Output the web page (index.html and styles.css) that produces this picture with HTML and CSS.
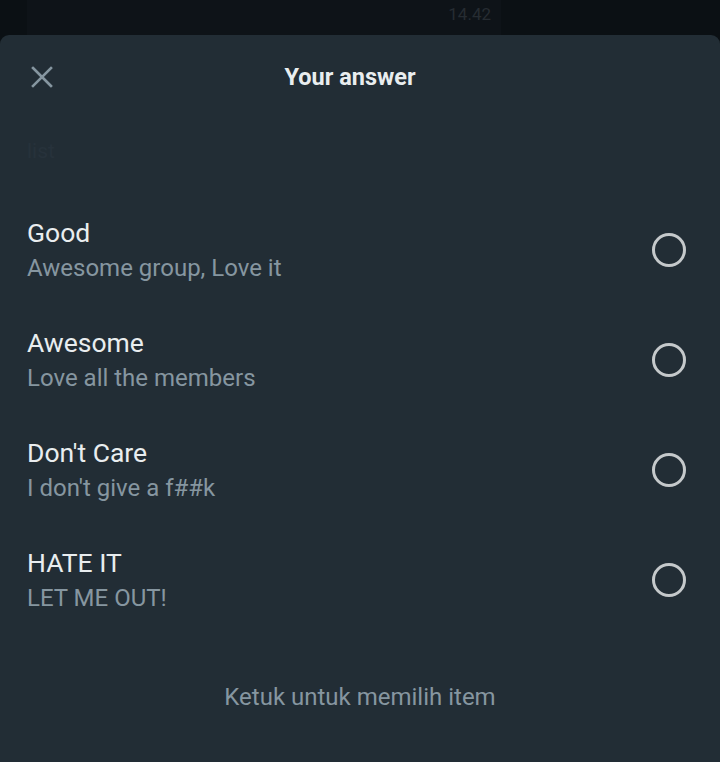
FILE: index.html
```html
<!DOCTYPE html>
<html lang="en">
<head>
	<meta charset="UTF-8">
	<meta name="viewport" content="width=device-width, initial-scale=1.0">
	<title>Your answer</title>
	<link rel="stylesheet" href="styles.css">
</head>
<body>
	<div class="chat">
		<div class="bubble"><span class="time">14.42</span></div>
		<div class="wall"></div>
	</div>

	<div class="sheet">
		<div class="header">
			<svg class="close" width="22" height="22" viewBox="0 0 22 22">
				<path d="M2 2 L20 20 M20 2 L2 20" stroke="#8696a0" stroke-width="2.6" stroke-linecap="square" fill="none"/>
			</svg>
			<h2 class="title">Your answer</h2>
		</div>

		<div class="ghost">list</div>

		<ul class="options">
			<li class="option">
				<div class="text">
					<div class="label">Good</div>
					<div class="desc">Awesome group, Love it</div>
				</div>
				<span class="radio"></span>
			</li>
			<li class="option">
				<div class="text">
					<div class="label">Awesome</div>
					<div class="desc">Love all the members</div>
				</div>
				<span class="radio"></span>
			</li>
			<li class="option">
				<div class="text">
					<div class="label">Don't Care</div>
					<div class="desc">I don't give a f##k</div>
				</div>
				<span class="radio"></span>
			</li>
			<li class="option">
				<div class="text">
					<div class="label">HATE IT</div>
					<div class="desc">LET ME OUT!</div>
				</div>
				<span class="radio"></span>
			</li>
		</ul>

		<div class="hint">Ketuk untuk memilih item</div>
	</div>
</body>
</html>
```

FILE: styles.css
```css
* {
	box-sizing: border-box;
}
body {
	margin: 0;
	height: 762px;
	overflow: hidden;
	background-color: #0b1014;
	font-family: Roboto, "Noto Sans", sans-serif;
	display: flex;
	flex-direction: column;
}
.chat {
	height: 35px;
	display: flex;
	padding-left: 27px;
}
.bubble {
	width: 474px;
	background-color: #0e1318;
	display: flex;
	justify-content: flex-end;
	padding: 4px 10px 0 0;
}
.time {
	font-size: 17px;
	color: #262c32;
}
.wall {
	flex: 1;
}
.sheet {
	flex: 1;
	background-color: #222d35;
	border-radius: 9px 9px 0 0;
	display: flex;
	flex-direction: column;
}
.header {
	position: relative;
	height: 84px;
	display: flex;
	align-items: center;
	justify-content: center;
	padding-right: 20px;
}
.close {
	position: absolute;
	left: 31px;
	top: 31px;
}
.title {
	margin: 0;
	font-size: 23.5px;
	font-weight: 700;
	color: #e9edef;
}
.ghost {
	padding-left: 27px;
	height: 76px;
	padding-top: 20px;
	font-size: 21px;
	color: #27323b;
}
.options {
	list-style: none;
	margin: 0;
	padding: 0;
}
.option {
	height: 110px;
	display: flex;
	align-items: center;
	justify-content: space-between;
	padding: 0 34px 0 27px;
}
.label {
	font-size: 26.5px;
	color: #e9edef;
	line-height: 34px;
}
.desc {
	font-size: 24px;
	color: #8696a0;
	line-height: 34px;
	margin-top: 1px;
}
.radio {
	width: 34px;
	height: 34px;
	border: 3px solid #c5c9cb;
	border-radius: 50%;
}
.hint {
	text-align: center;
	margin-top: 48px;
	font-size: 24px;
	color: #8696a0;
}
```
